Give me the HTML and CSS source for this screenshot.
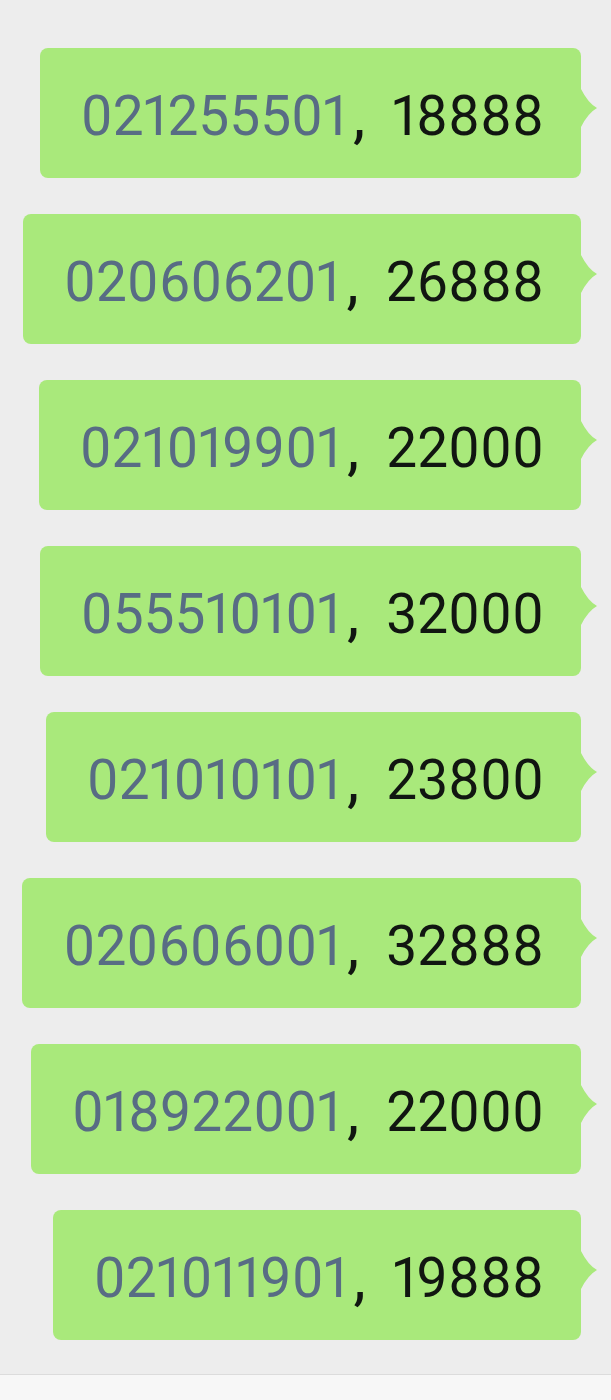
FILE: index.html
```html
<!DOCTYPE html>
<html lang="zh-CN">

<head>
    <meta charset="UTF-8">
    <meta name="viewport" content="width=device-width, initial-scale=1.0">
    <title>聊天</title>
    <link rel="stylesheet" href="styles.css">
</head>

<body>
    <main class="chat">
        <div class="bubble"><span class="code">021255501</span><span class="sep">,</span>18888</div>
        <div class="bubble"><span class="code">020606201</span><span class="sep">,</span>26888</div>
        <div class="bubble"><span class="code">021019901</span><span class="sep">,</span>22000</div>
        <div class="bubble"><span class="code">055510101</span><span class="sep">,</span>32000</div>
        <div class="bubble"><span class="code">021010101</span><span class="sep">,</span>23800</div>
        <div class="bubble"><span class="code">020606001</span><span class="sep">,</span>32888</div>
        <div class="bubble"><span class="code">018922001</span><span class="sep">,</span>22000</div>
        <div class="bubble"><span class="code">021011901</span><span class="sep">,</span>19888</div>
    </main>
    <footer class="input-bar"></footer>
</body>

</html>
```
FILE: styles.css
```css
body {
    margin: 0;
    background-color: #ededed;
    font-family: Roboto, "Noto Sans CJK SC", sans-serif;
}

.chat {
    display: flex;
    flex-direction: column;
    align-items: flex-end;
    gap: 36px;
    padding: 48px 30px 34px 0;
}

.bubble {
    position: relative;
    display: flex;
    align-items: center;
    height: 130px;
    padding: 5px 37px 0 41px;
    box-sizing: border-box;
    background-color: #a9e97b;
    border-radius: 8px;
    color: #111611;
    font-size: 55px;
    font-variant-numeric: proportional-nums;
    white-space: pre;
}

.bubble::after {
    content: "";
    position: absolute;
    left: 100%;
    top: 41px;
    width: 16px;
    height: 38px;
    background-color: #a9e97b;
    clip-path: path("M0 0 Q7 14 16 19 Q7 24 0 38 Z");
}

.code {
    color: #586c84;
}

.sep {
    margin: 0 27px 0 6px;
    font-size: 62px;
}

.input-bar {
    height: 25px;
    border-top: 1px solid #dcdcdc;
    background-color: #f7f7f7;
}
```
